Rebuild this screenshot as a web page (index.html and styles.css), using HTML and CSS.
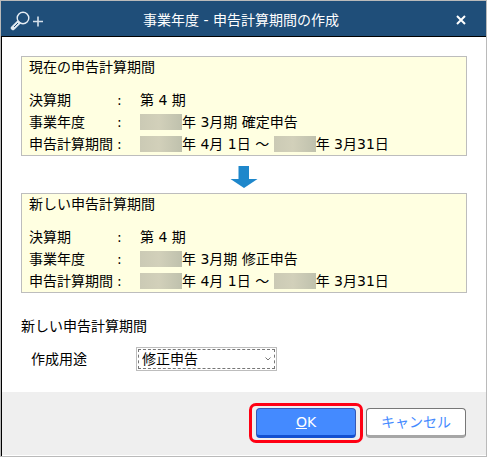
FILE: index.html
```
<!DOCTYPE html>
<html lang="ja">
<head>
    <meta charset="UTF-8">
    <meta name="viewport" content="width=device-width, initial-scale=1.0">
    <title>事業年度 - 申告計算期間の作成</title>
    <link rel="stylesheet" href="styles.css">
</head>

<body>

    <div class="dialog">
        <header class="title-bar">
            <svg class="zoom-icon" width="34" height="22" viewBox="0 0 34 22" aria-hidden="true">
                <circle cx="14" cy="9" r="5.800" fill="none" stroke="#e6edf4" stroke-width="1.400"/>
                <path d="M9 14L4 19" stroke="#dfe8f0" stroke-width="4.500" stroke-linecap="round"/>
                <path d="M9 14L5 18" stroke="#1f4e79" stroke-width="1"/>
                <path d="M24 12.500H34M29 7.500V17.500" stroke="#d5e0ea" stroke-width="1.600"/>
            </svg>
            <h1>事業年度 - 申告計算期間の作成</h1>
            <button type="button" class="close-button" aria-label="閉じる">
                <svg width="12" height="12" viewBox="0 0 12 12" aria-hidden="true">
                    <path d="M2 2L10 10M10 2L2 10" stroke="#fff" stroke-width="2"/>
                </svg>
            </button>
        </header>

        <form class="dialog-form">
            <main class="content">
                <section class="period">
                    <h2>現在の申告計算期間</h2>
                    <table>
                        <tr>
                            <th>決算期</th>
                            <td class="colon">:</td>
                            <td>第 4 期</td>
                        </tr>
                        <tr>
                            <th>事業年度</th>
                            <td class="colon">:</td>
                            <td><span class="mask"></span>年 3月期 確定申告</td>
                        </tr>
                        <tr>
                            <th>申告計算期間</th>
                            <td class="colon">:</td>
                            <td><span class="mask"></span>年 4月 1日 ～ <span class="mask"></span>年 3月31日</td>
                        </tr>
                    </table>
                </section>

                <svg class="arrow" width="28" height="22" viewBox="0 0 28 22" aria-hidden="true">
                    <path d="M8.500 0H19V13H27.500L14 22L0.500 13H8.500Z" fill="#1e87cb"/>
                </svg>

                <section class="period">
                    <h2>新しい申告計算期間</h2>
                    <table>
                        <tr>
                            <th>決算期</th>
                            <td class="colon">:</td>
                            <td>第 4 期</td>
                        </tr>
                        <tr>
                            <th>事業年度</th>
                            <td class="colon">:</td>
                            <td><span class="mask"></span>年 3月期 修正申告</td>
                        </tr>
                        <tr>
                            <th>申告計算期間</th>
                            <td class="colon">:</td>
                            <td><span class="mask"></span>年 4月 1日 ～ <span class="mask"></span>年 3月31日</td>
                        </tr>
                    </table>
                </section>

                <h2 class="group-title">新しい申告計算期間</h2>
                <div class="field">
                    <label for="youto">作成用途</label>
                    <div class="select-box">
                        <select id="youto" name="youto">
                            <option>修正申告</option>
                        </select>
                        <svg class="chevron" width="8" height="6" viewBox="0 0 8 6" aria-hidden="true">
                            <path d="M1.500 1.500L4 4L6.500 1.500" fill="none" stroke="#777" stroke-width="1"/>
                        </svg>
                    </div>
                </div>
            </main>

            <footer class="buttons">
                <div class="highlight">
                    <button type="submit" class="button ok-button" accesskey="o"><span><u>O</u>K</span></button>
                </div>
                <button type="button" class="button cancel-button">キャンセル</button>
            </footer>
        </form>
    </div>

</body>
</html>
```
FILE: styles.css
```
* {
    box-sizing: border-box;
}

body {
    margin: 0;
    font-family: "DejaVu Sans", "Noto Sans CJK JP", sans-serif;
    font-size: 14px;
    line-height: 20px;
    color: #000;
    background-color: #fff;
}

button,
select {
    font: inherit;
}

h1,
h2 {
    margin: 0;
    font-size: 14px;
    font-weight: normal;
}

.dialog {
    min-height: 100vh;
    display: flex;
    flex-direction: column;
    border: 1px solid #bababa;
    background-color: #fff;
}

.title-bar {
    display: grid;
    grid-template-columns: 40px 1fr 40px;
    align-items: center;
    height: 36px;
    padding: 2px 13px 0 8px;
    border-bottom: 1px solid #000;
    background-color: #1f4e79;
    color: #fff;
}

.title-bar h1 {
    text-align: center;
}

.zoom-icon,
.close-button svg,
.arrow {
    display: block;
}

.close-button {
    justify-self: end;
    padding: 6px;
    border: none;
    background: none;
    cursor: pointer;
}

.dialog-form {
    flex: 1;
    display: flex;
    flex-direction: column;
    padding-bottom: 1px;
    border-left: 1px solid #000;
}

.content {
    flex: 1;
    padding: 19px;
}

.period {
    padding: 0 7px;
    border: 1px solid #bdbdbd;
    background-color: #ffffe1;
}

.period table {
    margin-top: 12px;
    border-collapse: collapse;
}

.period th,
.period td {
    height: 22px;
    padding: 0;
    font-weight: normal;
    text-align: left;
    white-space: nowrap;
}

.period th {
    width: 88px;
}

.period .colon {
    width: 23px;
}

.mask {
    display: inline-block;
    width: 42px;
    height: 16px;
    vertical-align: -3px;
    background-image: linear-gradient(to right, #cbcab5, #d2d0ba 45%, #bfc1ad);
}

.arrow {
    margin: 10px auto 5px;
}

.group-title {
    margin-top: 23px;
}

.field {
    display: flex;
    align-items: center;
    margin-top: 11px;
    padding-left: 10px;
}

.field label {
    width: 105px;
}

.select-box {
    position: relative;
    width: 141px;
    padding: 1px;
    border: 1px solid #bdbdbd;
}

.select-box select {
    display: block;
    width: 100%;
    height: 20px;
    padding: 0 16px 0 3px;
    border: 1px dashed #777;
    border-radius: 0;
    outline: none;
    line-height: 18px;
    color: #000;
    background-color: #fff;
    appearance: none;
}

.chevron {
    position: absolute;
    top: 8px;
    right: 4px;
    pointer-events: none;
}

.buttons {
    display: flex;
    justify-content: flex-end;
    align-items: center;
    gap: 3px;
    padding: 11px 20px 12px;
    background-color: #efefef;
}

.highlight {
    padding: 2px 4px;
    border: 3px solid #ff0013;
    border-radius: 7px;
}

.button {
    display: block;
    width: 100px;
    height: 30px;
    padding: 0;
    border-radius: 4px;
    cursor: pointer;
}

.ok-button {
    border: 1px solid #3658b5;
    border-bottom: 3px solid #124fd0;
    background-color: #448aff;
    color: #fff;
}

.cancel-button {
    border: 1px solid #777;
    border-bottom: 3px solid #a6a6a6;
    background-color: #fff;
    color: #448aff;
}
```
